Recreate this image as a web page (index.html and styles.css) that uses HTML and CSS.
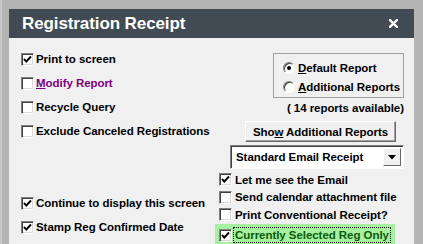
FILE: index.html
```html
<!DOCTYPE html>
<html>
<head>
<meta charset="utf-8">
<link rel="stylesheet" href="styles.css">
</head>
<body>
<div class="window">
  <div class="titlebar">
    <span class="title">Registration Receipt</span>
    <svg class="close" width="9" height="9" viewBox="0 0 9 9"><path d="M1 1 L8 8 M8 1 L1 8" stroke="#fff" stroke-width="2.4" stroke-linecap="square"/></svg>
  </div>
  <div class="panel">
    <div class="col-left">
      <div class="row"><span class="cb"><svg viewBox="0 0 13 13"><path d="M3 6 L5.3 8.5 L10 3.5" fill="none" stroke="#000" stroke-width="1.9"/></svg></span><span>Print to screen</span></div>
      <div class="row"><span class="cb"></span><span class="purple"><u>M</u>odify Report</span></div>
      <div class="row"><span class="cb"></span><span>Recycle Query</span></div>
      <div class="row"><span class="cb"></span><span>Exclude Canceled Registrations</span></div>
      <div class="bottom-group">
        <div class="row"><span class="cb"><svg viewBox="0 0 13 13"><path d="M3 6 L5.3 8.5 L10 3.5" fill="none" stroke="#000" stroke-width="1.9"/></svg></span><span>Continue to display this screen</span></div>
        <div class="row"><span class="cb"><svg viewBox="0 0 13 13"><path d="M3 6 L5.3 8.5 L10 3.5" fill="none" stroke="#000" stroke-width="1.9"/></svg></span><span>Stamp Reg Confirmed Date</span></div>
      </div>
    </div>
    <div class="col-right">
      <div class="radio-group">
        <div class="radio-row"><span class="radio on"></span><span><u>D</u>efault Report</span></div>
        <div class="radio-row"><span class="radio"></span><span><u>A</u>dditional Reports</span></div>
      </div>
      <div class="avail">( 14 reports available)</div>
      <div class="btn"><span>Sho<u>w</u> Additional Reports</span></div>
      <div class="select"><span class="select-text">Standard Email Receipt</span><span class="select-arrow"><svg width="8" height="5" viewBox="0 0 8 5"><path d="M0 0 H8 L4 4.5 Z" fill="#000"/></svg></span></div>
      <div class="rrow"><span class="cb"><svg viewBox="0 0 13 13"><path d="M3 6 L5.3 8.5 L10 3.5" fill="none" stroke="#000" stroke-width="1.9"/></svg></span><span>Let me see the Email</span></div>
      <div class="rrow"><span class="cb"></span><span>Send calendar attachment file</span></div>
      <div class="rrow"><span class="cb"></span><span>Print Conventional Receipt?</span></div>
      <div class="rrow highlight"><span class="cb"><svg viewBox="0 0 13 13"><path d="M3 6 L5.3 8.5 L10 3.5" fill="none" stroke="#000" stroke-width="1.9"/></svg></span><span class="focus">Currently Selected Reg Only</span></div>
    </div>
  </div>
</div>
</body>
</html>
```
FILE: styles.css
```css
html, body {
  margin: 0;
  padding: 0;
  background: #b4b4b4;
}
body {
  width: 423px;
  height: 244px;
  overflow: hidden;
  font-family: "Liberation Sans", Arial, sans-serif;
  font-weight: bold;
  font-size: 11.5px;
  letter-spacing: -0.05px;
  color: #000;
}
.window {
  width: 423px;
  height: 244px;
  box-sizing: border-box;
  padding: 9px 9px 0 9px;
  background: #b4b4b4;
  border-left: 2px solid #c8c8c8;
  padding-left: 7px;
  display: flex;
  flex-direction: column;
}
.titlebar {
  height: 29px;
  background: #424b53;
  display: flex;
  align-items: center;
  justify-content: space-between;
  padding: 0 16px 0 13px;
  flex: none;
}
.title {
  color: #fff;
  font-size: 17px;
  letter-spacing: -0.1px;
  padding-top: 1px;
}
.close {
  display: block;
}
.panel {
  flex: 1;
  background: #f0f0f0;
  display: flex;
}
.col-left {
  width: 198px;
  padding: 9px 0 0 12px;
  flex: none;
}
.row {
  height: 24px;
  display: flex;
  align-items: center;
  gap: 2px;
  white-space: nowrap;
}
.bottom-group {
  margin-top: 48px;
}
.cb {
  width: 13px;
  height: 13px;
  box-sizing: border-box;
  background: #fff;
  border: 1px solid;
  border-color: #808080 #ffffff #ffffff #808080;
  box-shadow: inset 1px 1px 0 #404040, inset -1px -1px 0 #d8d8d8;
  flex: none;
  display: block;
  position: relative;
}
.cb svg {
  position: absolute;
  left: -1px;
  top: -1px;
  width: 13px;
  height: 13px;
}
.purple {
  color: #800080;
}
.col-right {
  flex: 1;
  display: flex;
  flex-direction: column;
  align-items: flex-end;
  padding-right: 10px;
}
.radio-group {
  margin-top: 15px;
  width: 131px;
  height: 45px;
  box-sizing: border-box;
  border: 1px solid #a0a0a0;
  padding: 4px 0 0 9px;
  align-self: flex-end;
}
.radio-row {
  height: 19px;
  display: flex;
  align-items: center;
  gap: 3px;
}
.radio {
  width: 12px;
  height: 12px;
  box-sizing: border-box;
  border-radius: 50%;
  background: #fff;
  border: 1px solid;
  border-color: #808080 #ffffff #ffffff #808080;
  box-shadow: inset 1px 1px 0 #404040;
  position: relative;
  flex: none;
}
.radio.on::after {
  content: "";
  position: absolute;
  left: 3px;
  top: 3px;
  width: 4px;
  height: 4px;
  border-radius: 50%;
  background: #000;
}
.avail {
  margin-top: 3px;
  height: 14px;
  line-height: 14px;
  align-self: flex-end;
}
.btn {
  margin-top: 6px;
  margin-right: 8px;
  width: 151px;
  height: 21px;
  box-sizing: border-box;
  background: #f0f0f0;
  border: 1px solid;
  border-color: #ffffff #696969 #696969 #ffffff;
  box-shadow: inset -1px -1px 0 #a0a0a0;
  display: flex;
  align-items: center;
  justify-content: center;
  white-space: nowrap;
}
.select {
  margin-top: 3px;
  width: 174px;
  height: 24px;
  box-sizing: border-box;
  background: #fff;
  border: 1px solid;
  border-color: #808080 #ffffff #ffffff #808080;
  box-shadow: inset 1px 1px 0 #404040;
  display: flex;
  align-items: center;
  justify-content: space-between;
  padding: 2px 2px 2px 5px;
}
.select-arrow {
  width: 18px;
  height: 18px;
  box-sizing: border-box;
  background: #f0f0f0;
  border: 1px solid;
  border-color: #ffffff #696969 #696969 #ffffff;
  display: flex;
  align-items: center;
  justify-content: center;
}
.rrow {
  align-self: stretch;
  height: 17.5px;
  display: flex;
  align-items: center;
  gap: 3px;
  white-space: nowrap;
}
.select + .rrow {
  margin-top: 2px;
}
.highlight {
  background: #a6f0a0;
  margin: 0 9px 0 -4px;
  padding: 3px 0 5px 4px;
  color: #0a5a0a;
}
.focus {
  outline: 1px dotted #000;
  outline-offset: 1px;
}
```
